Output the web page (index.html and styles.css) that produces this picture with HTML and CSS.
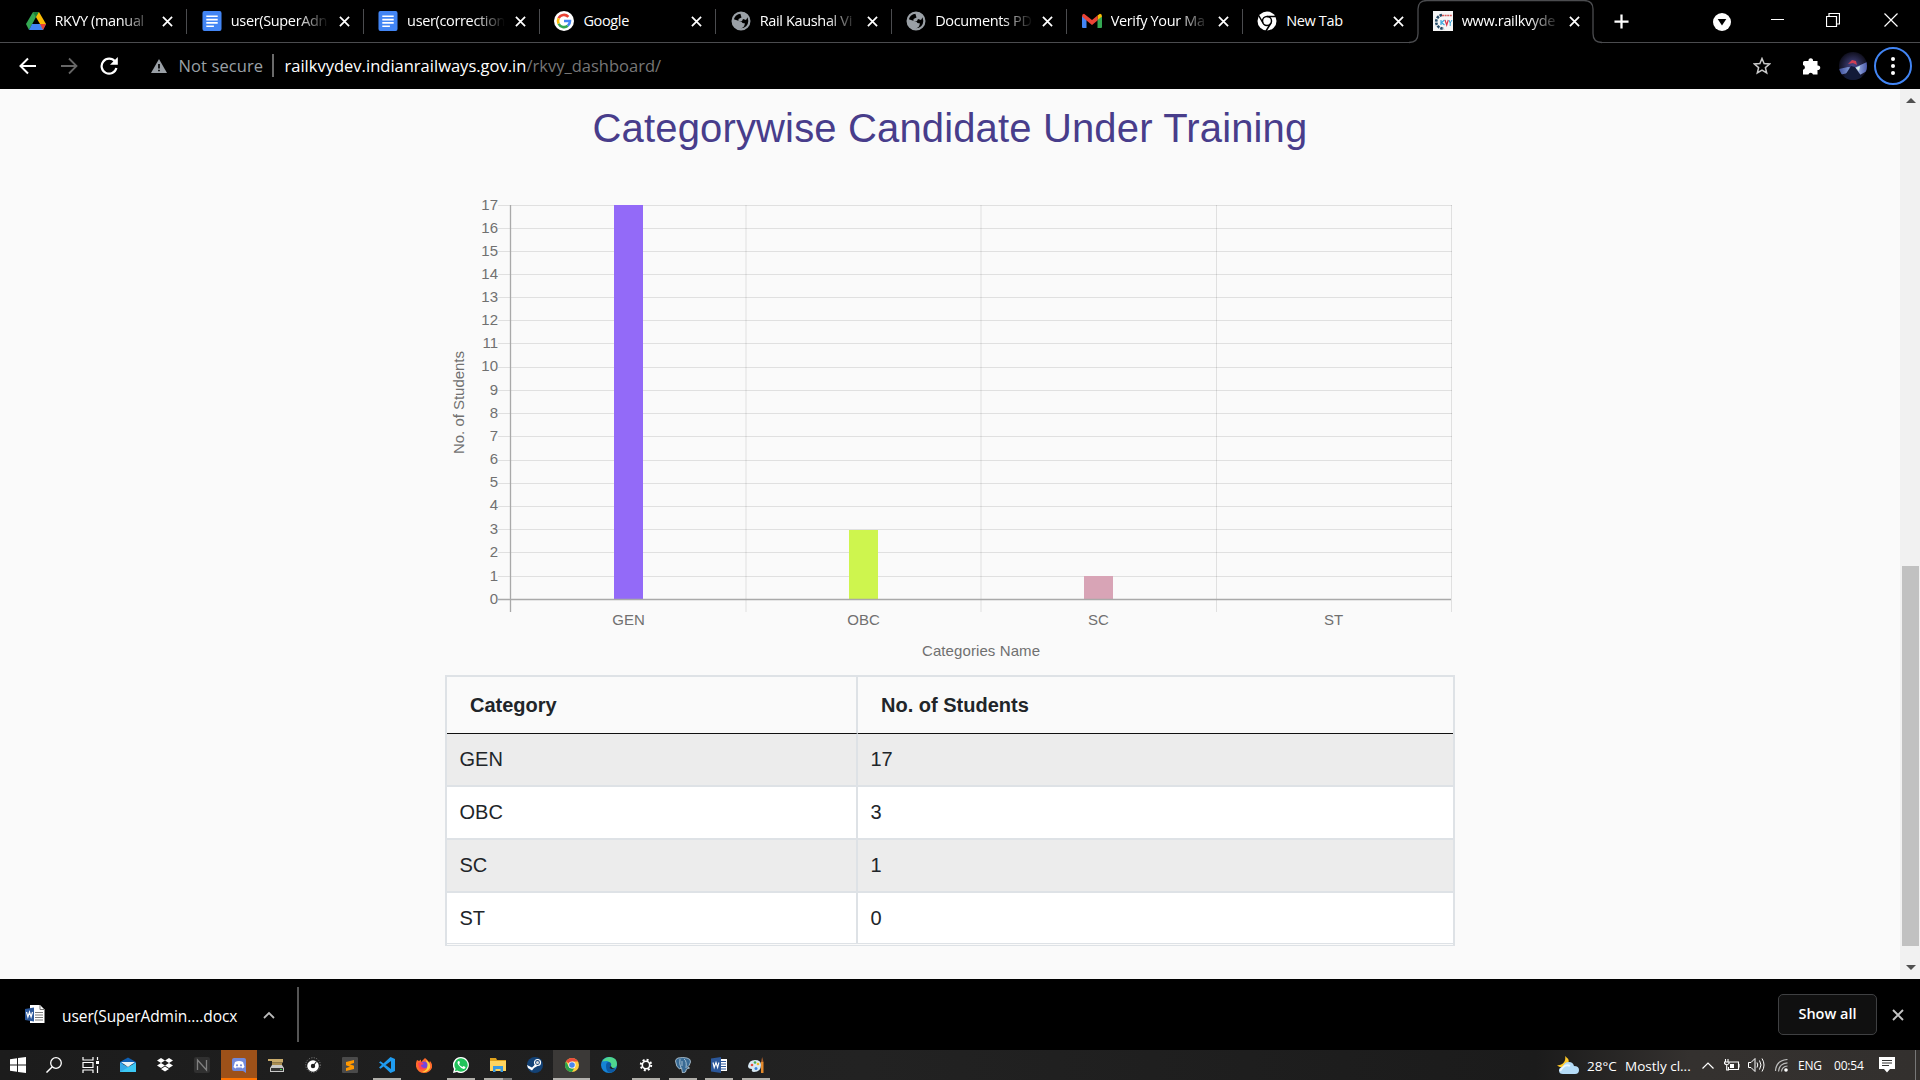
FILE: index.html
```html
<!DOCTYPE html>
<html lang="en">
<head>
<meta charset="utf-8">
<title>Categorywise Candidate Under Training</title>
<link rel="stylesheet" href="styles.css">
</head>
<body>
<svg class="defs" aria-hidden="true">
  <symbol id="close" viewBox="0 0 12 12"><path d="M1 1l10 10M11 1L1 11" stroke="currentColor" stroke-width="1.9" fill="none"/></symbol>
  <symbol id="docs" viewBox="0 0 20 21"><rect width="20" height="21" rx="2" fill="#4285f4"/><path d="M4 5.5h12M4 9h12M4 12.5h12M4 16h8" stroke="#fff" stroke-width="1.8"/></symbol>
  <symbol id="globe" viewBox="0 0 20 20"><circle cx="10" cy="10" r="8.400" fill="none" stroke="#9aa0a6" stroke-width="2.200"/><path d="M9 1.500q6-1 8 4l-2 3.500-3-1-1 2H7.500V8l3-1.500zM2 8l6 2q3 0 3.500 2l2.500.5-1 3-4 3Q1 17 2 8z" fill="#9aa0a6"/></symbol>
</svg>

<header class="tabs">
  <div class="tab">
    <svg class="fav" viewBox="0 0 20 18"><path d="M7 0h6l7 12h-6z" fill="#fbbc04"/><path d="M7 0l3 5-7 13-3-6z" fill="#34a853"/><path d="M6 12h14l-3 6H3z" fill="#4285f4"/><path d="M7 0h6l-3 5z" fill="#188038"/><path d="M14 12h6l-3 6z" fill="#ea4335"/></svg>
    <span class="label fade">RKVY (manual</span><svg class="x"><use href="#close"/></svg>
  </div>
  <div class="tab"><svg class="fav"><use href="#docs"/></svg><span class="label fade">user(SuperAdn</span><svg class="x"><use href="#close"/></svg></div>
  <div class="tab"><svg class="fav"><use href="#docs"/></svg><span class="label fade">user(correction</span><svg class="x"><use href="#close"/></svg></div>
  <div class="tab">
    <svg class="fav" viewBox="0 0 20 20"><circle cx="10" cy="10" r="10" fill="#fff"/><g fill="none" stroke-width="2.6"><path d="M14.4 5.8A6 6 0 0 0 4.6 7.3" stroke="#ea4335"/><path d="M4.6 7.3a6 6 0 0 0 0 5.4" stroke="#fbbc05"/><path d="M4.6 12.7a6 6 0 0 0 9.2 2" stroke="#34a853"/><path d="M13.8 14.7A6 6 0 0 0 16 10h-6" stroke="#4285f4"/></g></svg>
    <span class="label">Google</span><svg class="x"><use href="#close"/></svg>
  </div>
  <div class="tab"><svg class="fav"><use href="#globe"/></svg><span class="label fade">Rail Kaushal Vi</span><svg class="x"><use href="#close"/></svg></div>
  <div class="tab"><svg class="fav"><use href="#globe"/></svg><span class="label fade">Documents PD</span><svg class="x"><use href="#close"/></svg></div>
  <div class="tab">
    <svg class="fav" viewBox="0 0 20 16"><path d="M0 3v11q0 1 1 1h3.500V6z" fill="#4285f4"/><path d="M20 3v11q0 1-1 1h-3.500V6z" fill="#34a853"/><path d="M15.500 2.500L18 .8q2 0 2 2.700L15.500 7z" fill="#fbbc04"/><path d="M0 3.500Q0 .8 2 .8L10 7l5.500-4.500V7.500L10 12 4.500 7.500v0z" fill="#ea4335"/></svg>
    <span class="label fade">Verify Your Ma</span><svg class="x"><use href="#close"/></svg>
  </div>
  <div class="tab">
    <svg class="fav" viewBox="0 0 20 20"><circle cx="10" cy="10" r="9.500" fill="#fff"/><g fill="none" stroke="#000" stroke-width="1.500"><circle cx="10" cy="10" r="4.500"/><path d="M10 5.500h9M6 12L2 5M14 12l-5 8"/></g></svg>
    <span class="label">New Tab</span><svg class="x"><use href="#close"/></svg>
  </div>
  <div class="tab active">
    <svg class="edge" viewBox="0 0 193 44"><path d="M0 42.500q9 0 9-9V9Q9 .5 18 .5h157q9 0 9 8.500v24.500q0 9 9 9V44H0z" fill="#000"/><path d="M0 42.500q9 0 9-9V9Q9 .5 18 .5h157q9 0 9 8.500v24.500q0 9 9 9" fill="none" stroke="#4b4c4f" stroke-width="1.300"/></svg>
    <svg class="fav" viewBox="0 0 20 20"><rect width="20" height="20" fill="#f6f6f6"/><path d="M9 4A6 6 0 1 0 11 17.500" fill="none" stroke="#254a66" stroke-width="2.600" stroke-dasharray="2.500 1"/><path d="M9 4.500h10" stroke="#d65a5a" stroke-width="1.600" stroke-dasharray="2 .6"/><path d="M8 9v5M11.500 9l-3 2.500 3 2.500" stroke="#3aa7dc" stroke-width="1.200" fill="none"/><path d="M12 9l1.700 5 1.600-5" stroke="#d8354a" stroke-width="1.200" fill="none"/><path d="M16 9l1.200 3 1.800-3M17.200 12v3" stroke="#3aa7dc" fill="none"/></svg>
    <span class="label fade">www.railkvyde</span><svg class="x"><use href="#close"/></svg>
  </div>
  <svg class="plus" viewBox="0 0 16 16"><path d="M8 .5v15M.5 8h15" stroke="#fff" stroke-width="2.400"/></svg>
  <div class="window-controls">
    <svg width="18" height="18" viewBox="0 0 18 18"><circle cx="9" cy="9" r="9" fill="#fff"/><path d="M4.700 6h8.600L9 12.500z" fill="#000"/></svg>
    <svg width="13" height="14" viewBox="0 0 13 14"><path d="M0 6.500h13" stroke="#fff"/></svg>
    <svg width="14" height="14" viewBox="0 0 14 14"><path d="M.5 3.500h10v10H.5zM3 3V.5h10.500V11H11" fill="none" stroke="#fff" stroke-width="1.200"/></svg>
    <svg width="14" height="14" viewBox="0 0 14 14"><path d="M.5.5l13 13M13.500.5l-13 13" stroke="#fff" stroke-width="1.200"/></svg>
  </div>
</header>

<nav class="toolbar">
  <svg width="18" height="18" viewBox="0 0 18 18"><path d="M17 9H2M9 1.500L1.500 9 9 16.500" fill="none" stroke="#fff" stroke-width="2"/></svg>
  <svg width="18" height="18" viewBox="0 0 18 18"><path d="M1 9h15M9 1.500L16.500 9 9 16.500" fill="none" stroke="#666" stroke-width="1.800"/></svg>
  <svg width="18" height="18" viewBox="0 0 18 18"><path d="M15 4.500A7.500 7.500 0 1 0 16.400 11" fill="none" stroke="#fff" stroke-width="2.200"/><path d="M17.800 0v7.800H10z" fill="#fff"/></svg>
  <svg class="warn" width="16" height="14" viewBox="0 0 16 14"><path d="M8 0l8 14H0z" fill="#9aa0a6"/><path d="M8 5v4.500M8 10.700v1.600" stroke="#000" stroke-width="1.700"/></svg>
  <span class="secure">Not secure</span>
  <span class="divider"></span>
  <span class="host">railkvydev.indianrailways.gov.in</span><span class="path">/rkvy_dashboard/</span>
  <div class="actions">
    <svg width="18" height="18" viewBox="0 0 18 18"><path d="M9 1.500l2.100 5.100 5.500.4-4.200 3.600 1.300 5.400L9 13.100 4.300 16l1.300-5.400L1.400 7l5.500-.4z" fill="none" stroke="#c8c8c8" stroke-width="1.500"/></svg>
    <svg class="puzzle" width="18" height="18" viewBox="0 0 18 18"><path d="M1.500 4h4a2.300 2.300 0 1 1 4.500 0h4.500v4.500a2.300 2.300 0 1 1 0 4.500v4.500H10a2.400 2.400 0 0 0-4.600 0H0V12.800a2.400 2.400 0 0 0 0-4.700V5.500Q0 4 1.500 4z" fill="#fff"/></svg>
    <svg class="avatar" width="28" height="28" viewBox="0 0 28 28"><defs><radialGradient id="av"><stop offset="0" stop-color="#4a4a8c"/><stop offset="1" stop-color="#10101f"/></radialGradient><linearGradient id="beam"><stop offset="0" stop-color="#3d4f9c"/><stop offset=".6" stop-color="#a9c0f0"/><stop offset="1" stop-color="#4a58a8"/></linearGradient><clipPath id="avc"><circle cx="14" cy="14" r="14"/></clipPath></defs><g clip-path="url(#avc)"><rect width="28" height="28" fill="url(#av)"/><path d="M0 17l9-2 6 1 13-6v9l-9 5-10-3-9 2z" fill="url(#beam)"/><path d="M3 28l9-14 4 1 9 13z" fill="#121a38"/><path d="M9 12l4-4 4 1 1 4-4-2z" fill="#cf4054"/><path d="M17 16l4-2-1 5z" fill="#d5f0e2"/></g></svg>
    <span class="menu"><i></i><i></i><i></i></span>
  </div>
</nav>

<div class="viewport">
  <main class="page">
    <h1>Categorywise Candidate Under Training</h1>
    <svg class="chart" width="1010" height="480" viewBox="445 190 1010 480">
      <g class="grid">
        <path d="M498 205.500H1452M498 228.500H1452M498 251.500H1452M498 274.500H1452M498 297.500H1452M498 320.500H1452M498 343.500H1452M498 367.500H1452M498 390.500H1452M498 413.500H1452M498 436.500H1452M498 460.500H1452M498 483.500H1452M498 506.500H1452M498 529.500H1452M498 552.500H1452M498 576.500H1452"/>
        <path d="M746 205V612M981 205V612M1216.500 205V612M1451.500 205V612"/>
      </g>
      <rect x="614" y="205" width="29" height="394" fill="#936af8"/>
      <rect x="849" y="530" width="29" height="69" fill="#cef54e"/>
      <rect x="1084" y="576" width="29" height="23" fill="#d8a4b6"/>
      <path class="axis" d="M510.500 205V612M498 599.500H1451"/>
      <g class="tick-y">
        <text x="498" y="210">17</text><text x="498" y="233">16</text><text x="498" y="256">15</text><text x="498" y="279">14</text><text x="498" y="302">13</text><text x="498" y="325">12</text><text x="498" y="348">11</text><text x="498" y="371">10</text><text x="498" y="395">9</text><text x="498" y="418">8</text><text x="498" y="441">7</text><text x="498" y="464">6</text><text x="498" y="487">5</text><text x="498" y="510">4</text><text x="498" y="534">3</text><text x="498" y="557">2</text><text x="498" y="581">1</text><text x="498" y="604">0</text>
      </g>
      <g class="tick-x">
        <text x="628.500" y="625">GEN</text><text x="863.500" y="625">OBC</text><text x="1098.500" y="625">SC</text><text x="1333.500" y="625">ST</text>
        <text x="981" y="656" textLength="118">Categories Name</text>
        <text transform="translate(464 402.500) rotate(-90)" textLength="103">No. of Students</text>
      </g>
    </svg>
    <div class="table-frame">
      <table>
        <thead><tr><th>Category</th><th>No. of Students</th></tr></thead>
        <tbody>
          <tr><td>GEN</td><td>17</td></tr>
          <tr><td>OBC</td><td>3</td></tr>
          <tr><td>SC</td><td>1</td></tr>
          <tr><td>ST</td><td>0</td></tr>
        </tbody>
      </table>
    </div>
  </main>
  <aside class="scrollbar">
    <svg width="10" height="5" viewBox="0 0 10 5"><path d="M0 5l5-5 5 5z" fill="#505050"/></svg>
    <span class="thumb"></span>
    <svg width="10" height="5" viewBox="0 0 10 5"><path d="M0 0l5 5 5-5z" fill="#505050"/></svg>
  </aside>
</div>

<section class="shelf">
  <svg class="doc" width="20" height="19" viewBox="0 0 20 19"><path d="M5 0h10l4.500 4.500V18H5z" fill="#fff"/><path d="M15 0v4.500h4.500" fill="none" stroke="#777"/><path d="M10 7.500h8M10 10h8M10 12.500h8M10 15h8" stroke="#7a7a7a"/><path d="M0 4l9-1.500v14L0 15z" fill="#2b579a"/><path d="M1.500 7l1.400 5 1.600-5 1.600 5 1.400-5" fill="none" stroke="#fff" stroke-width="1.200"/></svg>
  <span class="file">user(SuperAdmin....docx</span>
  <svg class="chev" width="12" height="8" viewBox="0 0 12 8"><path d="M1 7l5-5 5 5" fill="none" stroke="#bbb" stroke-width="1.800"/></svg>
  <span class="bar"></span>
  <button class="show">Show all</button>
  <svg class="dismiss" width="12" height="12"><use href="#close"/></svg>
</section>

<footer class="taskbar">
  <div class="sys"><svg width="16" height="16" viewBox="0 0 16 16"><path d="M0 2.200L7 1.200V7.500H0zM8 1l8-1v7.500H8zM0 8.500h7v6.300l-7-1zM8 8.500h8V16l-8-1z" fill="#fff"/></svg></div>
  <div class="sys"><svg width="16" height="16" viewBox="0 0 16 16"><circle cx="10" cy="6" r="5.300" fill="none" stroke="#fff" stroke-width="1.300"/><path d="M6.300 9.800L.5 15.600" stroke="#fff" stroke-width="1.400"/></svg></div>
  <div class="sys"><svg width="17" height="16" viewBox="0 0 17 16"><path d="M1 0v3h10V0M1 16v-3h10v3M1 5.500h10v5H1zM15.500 0v3M15.500 9v7" fill="none" stroke="#fff" stroke-width="1.200"/><path d="M14 4h3v3h-3z" fill="#fff"/></svg></div>
  <div class="app first"><svg viewBox="0 0 16 16"><path d="M0 5l8-4.500L16 5v2H0z" fill="#0f60b4"/><path d="M0 5.500l8 4.500 8-4.500V15H0z" fill="#35a8e8"/><path d="M1 5h14l-7 5z" fill="#e9f3fa"/><path d="M0 15L16 6v9z" fill="#3cc8f4"/></svg></div>
  <div class="app"><svg viewBox="0 0 16 16"><path d="M4 1l4 2.500L4 6 0 3.500zM12 1l4 2.500L12 6 8 3.500zM4 6l4 2.500L4 11 0 8.500zM12 6l4 2.500-4 2.500-4-2.500zM8 9.500l4 2.500-4 2.500L4 12z" fill="#fff"/></svg></div>
  <div class="app"><svg viewBox="0 0 16 16"><rect width="16" height="16" rx="2" fill="#303030"/><path d="M3.500 13V3l9 10V3" fill="none" stroke="#808080" stroke-width="1.300"/></svg></div>
  <div class="app discord"><svg viewBox="0 0 16 16"><path d="M3 1h10q2 0 2 2v13l-3-2H3q-2 0-2-2V3q0-2 2-2z" fill="#7289da"/><path d="M4 5q4-2 8 0l1.500 5-2 1.500-1-1h-5l-1 1-2-1.500z" fill="#fff"/><circle cx="6" cy="8.300" r="1.100" fill="#7289da"/><circle cx="10" cy="8.300" r="1.100" fill="#7289da"/></svg></div>
  <div class="app"><svg viewBox="0 0 16 16"><path d="M0 2h15v3.500H4V4H0z" fill="#c9ab6b"/><path d="M4 5.500h10V8H4z" fill="#a98d52"/><path d="M4 8h10l2 3v4H2v-4z" fill="#c8c8c8"/><path d="M3 11h12v3H3z" fill="#333"/><path d="M12 12h2v1h-2z" fill="#3ed14a"/></svg></div>
  <div class="app"><svg viewBox="0 0 16 16"><circle cx="8" cy="8" r="7.300" fill="none" stroke="#888" stroke-width="1" stroke-dasharray="1 1.500"/><circle cx="8" cy="9" r="4" fill="none" stroke="#fff" stroke-width="3.600"/><path d="M8.500 8.500l3-4" stroke="#222" stroke-width="1.100"/></svg></div>
  <div class="app"><svg viewBox="0 0 16 16"><rect width="16" height="16" rx="1" fill="#4a4a4a"/><path d="M12 3v3L8 7.300l4 1.400V12l-8 2v-3l4-1.300-4-1.400V5z" fill="#ff9800"/></svg></div>
  <div class="app open"><svg viewBox="0 0 16 16"><path d="M11.500 0L16 2v12l-4.500 2-10-9.500L0 5.500l1.500-1.200L12 12V4L1.500 11.700 0 10.500z" fill="#1f9cf0"/></svg></div>
  <div class="app"><svg viewBox="0 0 16 16"><path d="M1 3l2 1 2-1.500V5l4-4q4 3 4 5l1-2q5 6-1 10.500-5 3-10 0Q-2 10 1 3z" fill="#ff6a2b"/><path d="M10 3q5 3 4 8-3 5-8 4 6-2 5-6z" fill="#ffd23d"/><circle cx="8" cy="8" r="3.500" fill="#7445dc"/><path d="M2 6q4-2 6 1L5 8q0 3 4 3-3 3-6 0z" fill="#ff4056"/></svg></div>
  <div class="app open"><svg viewBox="0 0 16 16"><path d="M8 0a8 8 0 1 1-4 15L0 16l1-4A8 8 0 0 1 8 0z" fill="#fff"/><path d="M8 1.300a6.700 6.700 0 1 1-3.700 12.300l-2.400.6.700-2.400A6.700 6.700 0 0 1 8 1.300z" fill="#21c35a"/><path d="M5.500 4q-2 1 0 4t5 4q2 0 2-2l-2-1-1 1Q7 9 6 7l1-1-.7-2z" fill="#fff"/></svg></div>
  <div class="app open stacked"><svg viewBox="0 0 16 16"><path d="M0 1h6l1 2h9v11H0z" fill="#e0a21c"/><path d="M0 4h16v10H0z" fill="#ffd45e"/><path d="M3 9h10v6h-2.500v-3h-5v3H3z" fill="#3a9ae0"/></svg></div>
  <div class="app"><svg viewBox="0 0 16 16"><circle cx="8" cy="8" r="8" fill="#134276"/><circle cx="10.500" cy="5.500" r="3" fill="none" stroke="#fff" stroke-width="1.200"/><circle cx="10.500" cy="5.500" r="1.500" fill="#ddd"/><path d="M0 8l5 2.500 3-3 2.500 1.500L7 11l-2 2.500L1 11z" fill="#fff"/></svg></div>
  <div class="app current"><svg viewBox="0 0 16 16"><circle cx="8" cy="8" r="7" fill="#ffcd40"/><path d="M8 8L2 4.400A7 7 0 0 1 14 4.500H8z" fill="#ea4c3d"/><path d="M8 15A7 7 0 0 1 2 4.400L5 10l3 1.500 2 0z" fill="#2ca24c"/><circle cx="8" cy="8" r="3.600" fill="#fff"/><circle cx="8" cy="8" r="2.800" fill="#4a86ee"/></svg></div>
  <div class="app"><svg viewBox="0 0 16 16"><circle cx="8" cy="8" r="8" fill="#1583d5"/><path d="M1 4.500Q4-.3 9 0q7 .5 7 7 0 4-5 4-3 0-2-2 1-4-3-5-3 0-5 .5z" fill="#4fd68e"/><path d="M5 9q0-4 3-4 3 1 2 3.500Q9 11 12 12.500q2 .3 3-.5-3 4-7 3.500Q5 14 5 9z" fill="#0c59a4"/><path d="M8.500 7.500q2 1 0 3.500 3 2 6 1l-3-1z" fill="#222"/></svg></div>
  <div class="app open"><svg viewBox="0 0 16 16"><circle cx="8" cy="8" r="5.200" fill="none" stroke="#fff" stroke-width="2" stroke-dasharray="2 2.080"/><circle cx="8" cy="8" r="3.700" fill="none" stroke="#fff" stroke-width="1.600"/></svg></div>
  <div class="app open"><svg viewBox="0 0 16 16"><path d="M3 1q5-1 9 0 4 1 3.500 4-1 4-3 5l2 1-3 1-1 3-3 1-1-5-2 1Q1 10 .5 4 .5 2 3 1z" fill="#386a94" stroke="#bcd0de" stroke-width=".8"/><path d="M5 2q-1 5 1 9M9 2q3 2 2 9M7 4v5" stroke="#bcd0de" stroke-width=".8" fill="none"/></svg></div>
  <div class="app open"><svg viewBox="0 0 16 16"><path d="M8 2h8v12H8z" fill="#fff"/><path d="M10 4.500h5M10 7h5M10 9.500h5M10 12h5" stroke="#2b579a"/><path d="M0 1.500L10 0v16L0 14.500z" fill="#2b579a"/><path d="M2 5.500l1.200 5L5 5.500l1.600 5 1.300-5" fill="none" stroke="#fff" stroke-width="1.100"/></svg></div>
  <div class="app open"><svg viewBox="0 0 16 16"><path d="M7 3q6 0 6 5 0 7-7 7-3 0-2-3-4 0-4-3 1-6 7-6z" fill="#d6e8f3"/><circle cx="4" cy="8" r="1.300" fill="#e34b3c"/><circle cx="7" cy="5.500" r="1.300" fill="#4aaf50"/><circle cx="10" cy="7" r="1.300" fill="#f5b920"/><circle cx="8" cy="11.500" r="1.500" fill="#3c84da"/><path d="M13 5h2.500v11H13z" fill="#e58a2c"/><path d="M13 5l1.200-5 1.300 5z" fill="#a85d28"/></svg></div>

  <div class="tray">
    <svg class="weather" width="22" height="18" viewBox="0 0 22 18"><path d="M8 0a7 7 0 0 1-8 9q3 4 9 1 6-5-1-10z" fill="#ffc928"/><path d="M6 18q-4 0-4-3.500Q2 11 6 11q1-5 6-5 4 0 5 4 5 0 5 4 0 4-4 4z" fill="#b5dcf7"/><path d="M3 15q5-8 10-5" fill="none" stroke="#e8f5ff" stroke-width="2"/></svg>
    <span class="temp">28°C</span><span class="sky">Mostly cl...</span>
    <svg class="up" width="12" height="7" viewBox="0 0 12 7"><path d="M.5 6.500L6 1l5.500 5.500" fill="none" stroke="#fff" stroke-width="1.200"/></svg>
    <svg class="battery" width="16" height="12" viewBox="0 0 16 12"><path d="M5 3h9.500v7.500h-10V8M15 5v3.500M1.500 0v3M4 0v3M.5 3H5v1.500Q3 7 .5 4.500zM2.700 6v5H5" fill="none" stroke="#fff" stroke-width="1.100"/><path d="M6 5h4v4H6z" fill="#fff"/></svg>
    <svg class="sound" width="17" height="14" viewBox="0 0 17 14"><path d="M.5 4.500H3l4-4v13l-4-4H.5zM9 4.500q1.500 2.500 0 5M11.500 2.500q3 4.500 0 9M14 .5q4 6.500 0 13" fill="none" stroke="#fff"/></svg>
    <svg class="wifi" width="13" height="13" viewBox="0 0 13 13"><path d="M.5 12Q1 1.500 12.500.5M3.500 12.500Q4 4.500 12.500 3.800M6.500 12.500q.5-5 6-5.500" fill="none" stroke="#bbb" stroke-width="1.200"/><circle cx="11" cy="11" r="1.800" fill="#fff"/></svg>
    <span class="lang">ENG</span><span class="clock">00:54</span>
    <svg class="note" width="16" height="16" viewBox="0 0 16 16"><path d="M0 0h16v12h-5l-3 3.500L5 12H0z" fill="#fff"/><path d="M3 3.500h10M3 6h10M3 8.500h7" stroke="#333"/></svg>
  </div>
</footer>
</body>
</html>
```
FILE: styles.css
```css
* { box-sizing: border-box; }
body {
  margin: 0;
  width: 1920px;
  height: 1080px;
  overflow: hidden;
  display: flex;
  flex-direction: column;
  background: #000;
  color: #fff;
  font-family: "Open Sans", "Noto Sans", sans-serif;
}
svg { display: block; flex: none; }
.defs { position: absolute; width: 0; height: 0; }

/* Tab strip */
.tabs {
  height: 43px;
  flex: none;
  display: flex;
  align-items: center;
  padding-left: 11px;
  border-bottom: 1px solid #4b4c4f;
}
.tab {
  width: 176.300px;
  height: 42px;
  flex: none;
  display: flex;
  align-items: center;
  padding: 0 14px 0 14.500px;
  position: relative;
}
.tab:nth-child(n+5) { width: 175.500px; }
.tab:not(.active)::after {
  content: "";
  position: absolute;
  right: 0;
  top: 9px;
  width: 1px;
  height: 25px;
  background: #4b4c4f;
}
.tab:nth-child(8)::after { visibility: hidden; }
.edge { position: absolute; left: -9px; top: 0; width: 193px; height: 44px; z-index: 0; }
.fav { width: 20px; height: 20px; }
.active .fav, .active .label, .active .x { z-index: 1; }
.label {
  width: 98px;
  margin-left: 9px;
  padding-bottom: 2px;
  white-space: nowrap;
  font-size: 14.500px;
  letter-spacing: -0.350px;
}
.fade {
  -webkit-mask-image: linear-gradient(90deg, #000 68%, transparent 100%);
  mask-image: linear-gradient(90deg, #000 68%, transparent 100%);
}
.x { width: 11px; height: 11px; margin-left: auto; }
.plus { width: 15px; height: 15px; margin-left: 20px; }
.window-controls { margin-left: auto; margin-right: 22px; padding-bottom: 2px; display: flex; align-items: center; }
.window-controls svg:nth-child(1) { margin: 3px 40px 0 0; }
.window-controls svg:nth-child(2) { margin-right: 42.500px; }
.window-controls svg:nth-child(3) { margin-right: 44px; }

/* Address bar */
.toolbar {
  height: 46px;
  flex: none;
  display: flex;
  align-items: center;
  padding: 0 8px 1px 19px;
  font-size: 16.500px;
}
.toolbar > svg { margin-right: 22.500px; }
.toolbar .warn { margin: 0 0 0 10px; }
.toolbar > svg:nth-child(3) { margin-right: 22.500px; }
.secure { margin-left: 12px; width: 93.500px; padding-bottom: 1px; letter-spacing: 0.100px; color: #9aa0a6; white-space: nowrap; }
.divider { width: 1.500px; height: 23px; background: #6a6a6a; margin-right: 11px; }
.host { width: 242px; padding-bottom: 1px; letter-spacing: 0.010px; white-space: nowrap; }
.path { padding-bottom: 1px; color: #777; white-space: nowrap; }
.actions { margin-left: auto; display: flex; align-items: center; }
.puzzle { margin-left: 32px; }
.avatar { margin-left: 18px; }
.menu {
  width: 38px;
  height: 38px;
  margin-left: 7px;
  border: 2.500px solid #4285f4;
  border-radius: 50%;
  display: flex;
  flex-direction: column;
  align-items: center;
  justify-content: center;
  gap: 3px;
}
.menu i { width: 4px; height: 4px; border-radius: 50%; background: #fff; }

/* Page */
.viewport { height: 890px; flex: none; display: flex; background: #fafafa; }
.page {
  width: 1900px;
  display: flex;
  flex-direction: column;
  align-items: center;
  font-family: "Liberation Sans", Arial, sans-serif;
  color: #212529;
}
h1 {
  margin: 15px 0 38px;
  height: 48px;
  line-height: 48px;
  font-size: 40px;
  font-weight: 400;
  letter-spacing: 0.150px;
  color: #483d8b;
  white-space: nowrap;
}
.chart { margin-bottom: 5px; font-size: 15px; }
.grid path { stroke: rgba(0, 0, 0, 0.1); fill: none; }
.axis { stroke: #a9a9a9; stroke-width: 1.300; fill: none; }
.chart text { fill: #707070; }
.tick-y { text-anchor: end; }
.tick-x { text-anchor: middle; }
.table-frame {
  width: 1010px;
  height: 271px;
  border: solid #dee2e6;
  border-width: 2px 2px 1px;
}
table { width: 1006px; border-spacing: 0; table-layout: fixed; font-size: 20px; }
th, td { padding: 0 12.500px; border-bottom: 2px solid #dee2e6; text-align: left; height: 53px; }
th { height: 57px; padding: 0 23px; border-bottom: 1px solid #111; }
th:first-child, td:first-child { width: 411px; border-right: 2px solid #dee2e6; }
tbody tr:nth-child(odd) { background: #ececec; }
tbody tr:nth-child(even) { background: #fff; }
tbody tr:last-child td { height: 51px; border-bottom-width: 1px; }
.scrollbar {
  width: 20px;
  background: #f1f1f1;
  display: flex;
  flex-direction: column;
  align-items: center;
  padding: 9px 0 9px 1px;
}
.thumb { width: 17px; height: 380px; margin: 463px 0 auto; background: #c1c1c1; }

/* Download shelf */
.shelf { height: 71px; flex: none; display: flex; align-items: center; padding: 0 16px 0 25px; }
.file { width: 175px; margin-left: 17px; padding-top: 2px; font-size: 15.500px; letter-spacing: -0.060px; white-space: nowrap; }
.chev { margin-left: 26px; }
.bar { width: 2px; height: 55px; margin-left: 22px; background: #555; }
.show {
  width: 99px;
  height: 41px;
  margin-left: auto;
  padding: 0 0 2px;
  border: 1px solid #3f4042;
  border-radius: 5px;
  background: #101010;
  color: #fff;
  font: 600 14.500px "Open Sans", sans-serif;
}
.dismiss { margin-left: 15px; color: #c4c4c4; }

/* Taskbar */
.taskbar {
  height: 30px;
  flex: none;
  display: flex;
  background: linear-gradient(90deg, #1c1c1c, #222 45%, #1b1b1b 80%, #34312f 88%, #33302e);
}
.sys { width: 36px; display: grid; place-items: center; }
.app { width: 36.950px; flex: none; display: grid; place-items: center; position: relative; }
.app.first { margin-left: 2px; }
.app svg { width: 16px; height: 16px; }
.app.discord { background: linear-gradient(#9d5119 28px, #ff7300 28px) 0 0 / 36px 100% no-repeat; }
.app.open { background: linear-gradient(#b0aea9, #b0aea9) 50% 100% / 28px 2px no-repeat; }
.app.stacked { background: linear-gradient(90deg, #b0aea9 19px, #777 19px) 50% 100% / 28px 2px no-repeat; }
.app.current { background: linear-gradient(#3b3937 28px, #b5b3af 28px); }
.tray { margin-left: auto; width: 363px; display: flex; align-items: center; border-right: 1px solid #777; margin-right: 4px; font-size: 13.500px; white-space: nowrap; }
.weather { margin-left: 4px; }
.temp { width: 30px; margin-left: 8px; padding-top: 2px; }
.sky { width: 66px; margin-left: 8px; padding-top: 2px; }
.up { margin-left: 11px; }
.battery { margin-left: 10px; }
.sound { margin-left: 8px; }
.wifi { margin-left: 10px; }
.lang { width: 24px; margin-left: 10px; font-size: 12px; letter-spacing: -0.200px; }
.clock { width: 28px; margin-left: 12px; font-size: 12px; letter-spacing: -0.200px; }
.note { margin-left: 17px; }
```
